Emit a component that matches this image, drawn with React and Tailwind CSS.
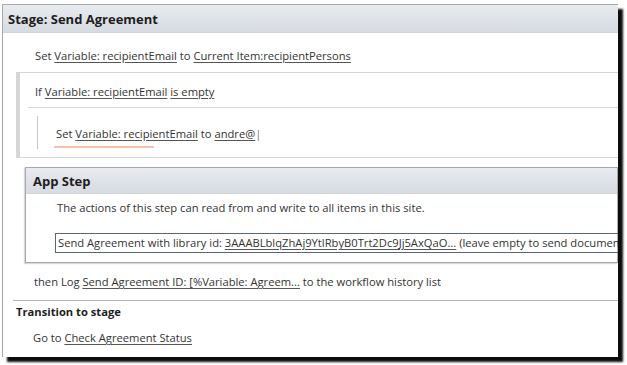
import React from "react";

const F = { fontFamily: '"Open Sans", "Noto Sans", sans-serif' };

function L({ children }) {
  return <span className="underline underline-offset-2 decoration-[#555]">{children}</span>;
}

export default function App() {
  return (
    <div className="w-[627px] h-[365px] bg-white relative overflow-hidden text-[#333]" style={F}>
      <div className="absolute left-[2px] top-[4px] w-[616px] h-[353px] bg-white border-l border-t border-[#a9a9a9] shadow-[5px_5px_2px_rgba(0,0,0,0.95)] overflow-hidden flex flex-col text-[11.2px] leading-[16px]">
        {/* header */}
        <div className="h-[28px] shrink-0 bg-gradient-to-b from-[#e8ebef] to-[#d7dbe2] border-b border-[#cfd3da] flex items-center pl-[5px]">
          <span className="font-bold text-[13px] text-[#1e1e1e]">Stage: Send Agreement</span>
        </div>
        {/* row 1 */}
        <div className="h-[39px] shrink-0 flex items-center pl-[32px] pt-[6px]">
          <span>Set <L>Variable: recipientEmail</L> to <L>Current Item:recipientPersons</L></span>
        </div>
        {/* If block */}
        <div className="ml-[13px] h-[86px] shrink-0 border-t border-b border-l-[4px] border-[#d6d6d6] flex flex-col">
          <div className="h-[35px] shrink-0 flex items-center pl-[15px] pt-[3px] border-b border-[#d6d6d6] ml-[8px]">
            <span className="-ml-[8px]">If <L>Variable: recipientEmail</L> <L>is empty</L></span>
          </div>
          <div className="flex-1 flex items-center pl-[17px]">
            <div className="h-[33px] border-l border-[#c8c8c8] flex flex-col justify-center pl-[18px] pt-[2px] relative">
              <span>Set <L>Variable: recipientEmail</L> to <L>andre@</L><span className="text-[#777]">|</span></span>
              <div className="absolute left-[16px] top-[30px] w-[100px] h-[2px] bg-[#f6c3a6]" />
            </div>
          </div>
        </div>
        {/* App step */}
        <div className="mt-[9px] ml-[22px] h-[96px] shrink-0 border border-[#a8a8a8] shadow-[-1px_1px_1px_rgba(0,0,0,0.15)] flex flex-col">
          <div className="h-[26px] shrink-0 bg-gradient-to-b from-[#e8ebef] to-[#d7dbe2] border-b border-[#cfd3da] flex items-center pl-[7px]">
            <span className="font-bold text-[13px] text-[#1e1e1e]">App Step</span>
          </div>
          <div className="h-[27px] shrink-0 flex items-center pl-[31px]">
            <span>The actions of this step can read from and write to all items in this site.</span>
          </div>
          <div className="pl-[29px] pt-[12px]">
            <div className="h-[20px] w-[620px] border border-[#5a6678] flex items-center pl-[2px] whitespace-nowrap overflow-hidden">
              <span>Send Agreement with library id: <L>3AAABLblqZhAj9YtlRbyB0Trt2Dc9Jj5AxQaO...</L> (leave empty to send documents)</span>
            </div>
          </div>
        </div>
        {/* then log */}
        <div className="h-[37px] shrink-0 flex items-center pl-[31px] pt-[1px]">
          <span>then Log <L>Send Agreement ID: [%Variable: Agreem...</L> to the workflow history list</span>
        </div>
        <div className="ml-[10px] border-t border-[#b4b4b4]" />
        <div className="h-[22px] shrink-0 flex items-center pl-[13px]">
          <span className="font-bold text-[#1e1e1e]">Transition to stage</span>
        </div>
        <div className="h-[30px] shrink-0 flex items-center pl-[30px]">
          <span>Go to <L>Check Agreement Status</L></span>
        </div>
      </div>
    </div>
  );
}
